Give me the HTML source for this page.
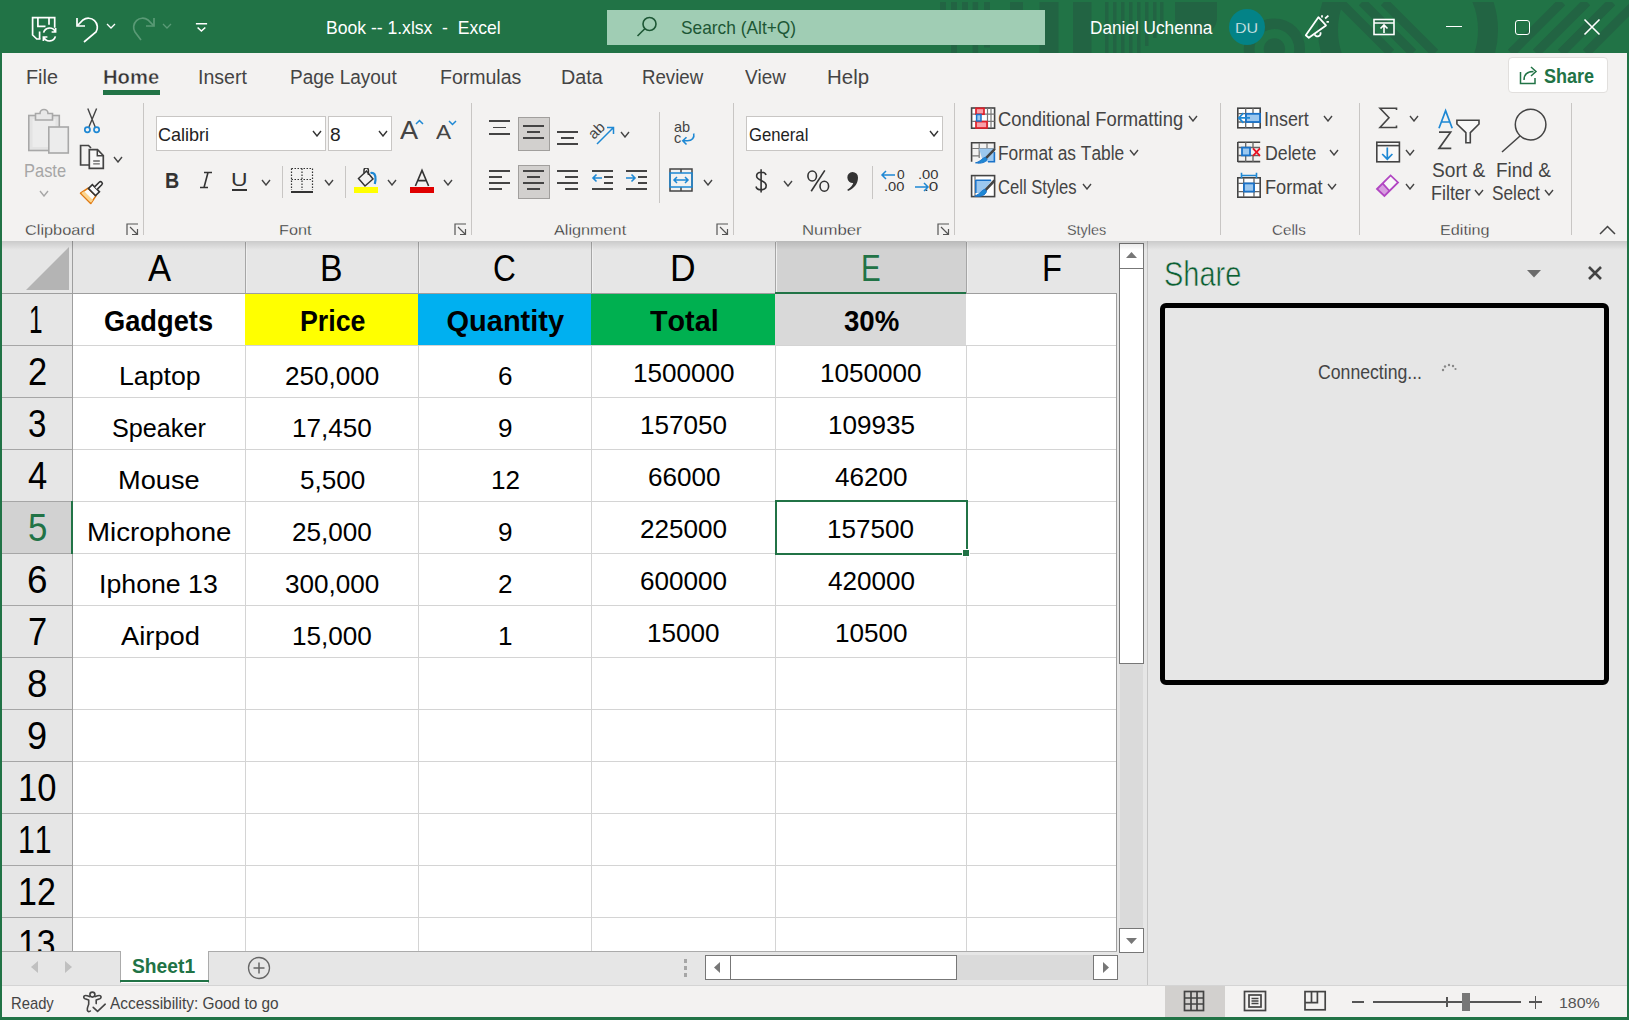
<!DOCTYPE html>
<html><head><meta charset="utf-8"><title>Excel</title><style>*{margin:0;padding:0}
html,body{width:1629px;height:1020px;overflow:hidden;background:#fff;font-family:"Liberation Sans",sans-serif}
.a,.t{position:absolute}
.t{white-space:nowrap;transform-origin:0 0;font-kerning:none}
.box{background:#fff;border:1px solid #c8c6c4;box-sizing:border-box}
.sb{background:#fff;border:1px solid #777;box-sizing:border-box}
</style></head><body>
<div class="a" style="left:0;top:0;width:1629px;height:53px;background:#217346"></div>
<svg class="a" style="left:0;top:0" width="1629" height="53" viewBox="0 0 1629 53">
<defs><clipPath id="tb"><rect x="900" y="2" width="729" height="51"/></clipPath></defs>
<g clip-path="url(#tb)" fill="#226443">
<rect x="940" y="2" width="6" height="43"/><rect x="951" y="2" width="6" height="51"/><rect x="962" y="2" width="6" height="43"/><rect x="972.6" y="2" width="5.5" height="51"/><rect x="984" y="2" width="6" height="45.5"/><rect x="1010" y="2" width="13" height="9"/>
<rect x="1039.5" y="2" width="19" height="51"/><rect x="1073" y="2" width="18.5" height="51"/>
<path d="M1105 2 h3.5 v51 h-3.5z M1113 2 h3.5 v51 h-3.5z M1121 2 h3.5 v51 h-3.5z M1129 2 h3.5 v51 h-3.5z M1137 2 h3.5 v51 h-3.5z M1145 2 h3.5 v44 h-3.5z M1153 2 h3.5 v36 h-3.5z M1160 2 h3.5 v28 h-3.5z"/>
<path d="M1175 2 H1217 V18 a17 17 0 0 1 -17 17 h-8 a17 17 0 0 1 -17 -17 z"/>
<circle cx="1274.4" cy="49" r="10.7"/>
<circle cx="1274.4" cy="49" r="25.25" fill="none" stroke="#226443" stroke-width="10.7"/>
<circle cx="1408" cy="30" r="80" fill="none" stroke="#226443" stroke-width="20"/>
<path d="M1340 2 L1391 53 M1362 2 L1413 53 M1384 2 L1435 53" stroke="#226443" stroke-width="9" fill="none"/>
<path d="M1511 53 L1562 2 M1536 53 L1587 2 M1561 53 L1612 2 M1586 53 L1637 2" stroke="#226443" stroke-width="9" fill="none"/>
</g>
</svg>
<svg class="a" style="left:25px;top:10px" width="40" height="35" viewBox="25 10 40 35" fill="none" stroke="#fff" stroke-width="1.7">
<path d="M40.5 39 H36.8 L32.6 35 V17.7 H54.7 V27.8"/><path d="M37.9 17.7 V26.3 H45.5 M49 17.7 V24.8 M39.6 31.5 V38.8"/>
<path d="M43.6 32.6 A6.2 6.2 0 0 1 55.2 31.6 M55.6 28 V32 H51.6"/><path d="M55.4 36.4 A6.2 6.2 0 0 1 43.8 37.4 M43.4 41 V37 H47.4"/>
</svg>
<svg class="a" style="left:74px;top:15px" width="26" height="28" viewBox="0 0 26 28" fill="none" stroke="#fff" stroke-width="1.7">
<path d="M3 3 V11 H11"/><path d="M3.5 10.5 L9 5 a9 9 0 0 1 13 12 L10 27"/>
</svg>
<svg class="a" style="left:105px;top:22px" width="12" height="8" viewBox="0 0 12 8" fill="none" stroke="#fff" stroke-width="1.3"><path d="M2 2 L6 6 L10 2"/></svg>
<svg class="a" style="left:131px;top:15px" width="26" height="28" viewBox="0 0 26 28" fill="none" stroke="#5a9a76" stroke-width="1.7">
<path d="M23 3 V11 H15"/><path d="M22.5 10.5 L17 5 a9 9 0 0 0 -13 12 L10 25"/>
</svg>
<svg class="a" style="left:161px;top:22px" width="12" height="8" viewBox="0 0 12 8" fill="none" stroke="#5a9a76" stroke-width="1.3"><path d="M2 2 L6 6 L10 2"/></svg>
<svg class="a" style="left:194px;top:20px" width="16" height="14" viewBox="0 0 16 14" fill="none" stroke="#fff" stroke-width="1.6"><path d="M1.9 3.8 H13.1 M3.6 7.5 L7.4 11 L11.3 7.5"/></svg>
<div class="t" style="left:326.16px;top:17.00px;font-size:18.50px;line-height:21px;color:#fff;transform:scaleX(0.9489);white-space:pre;">Book -- 1.xlsx  -  Excel</div>
<div class="a" style="left:607px;top:10px;width:438px;height:35px;background:#a0cdb4"></div>
<svg class="a" style="left:634px;top:14px" width="26" height="26" viewBox="0 0 26 26" fill="none" stroke="#1d5735" stroke-width="1.6"><circle cx="15.5" cy="10" r="6.5"/><path d="M10.8 14.7 L3.5 22"/></svg>
<div class="t" style="left:681.01px;top:17.00px;font-size:18.50px;line-height:21px;color:#1d5735;transform:scaleX(0.9365);">Search (Alt+Q)</div>
<div class="t" style="left:1090.29px;top:17.00px;font-size:18.50px;line-height:21px;color:#fff;transform:scaleX(0.9299);">Daniel Uchenna</div>
<div class="a" style="left:1229px;top:8.9px;width:36px;height:36px;border-radius:50%;background:#038387"></div>
<div class="t" style="left:1235.49px;top:18.80px;font-size:15.50px;line-height:17px;color:#f0fafa;transform:scaleX(1.0341);-webkit-text-stroke:0.35px #038387;">DU</div>
<svg class="a" style="left:1295px;top:8px" width="45" height="37" viewBox="0 0 45 37" fill="none" stroke="#fff" stroke-width="1.8" stroke-linejoin="round">
<path d="M10.8 27.2 L23.4 9.2 L31 17.4 L13.8 29.8 Z"/><path d="M19.6 26.4 A3.1 3.1 0 1 0 25.4 24.2"/>
<path d="M27 7.2 V9.6 M30.1 10.5 L33.4 7.6 M31.5 13.8 H33.9"/></svg>
<svg class="a" style="left:1372px;top:17px" width="24" height="20" viewBox="0 0 24 20" fill="none" stroke="#fff" stroke-width="1.6">
<rect x="2" y="2.5" width="20" height="15"/><path d="M2 6 H22 M12 16 V8.5 M8.5 11.5 L12 8 L15.5 11.5"/></svg>
<div class="a" style="left:1446px;top:25.5px;width:16px;height:1.6px;background:#fff"></div>
<div class="a" style="left:1515px;top:19.5px;width:15px;height:15px;border:1.6px solid #fff;border-radius:3px;box-sizing:border-box"></div>
<svg class="a" style="left:1582px;top:17px" width="20" height="20" viewBox="0 0 20 20" stroke="#fff" stroke-width="1.6"><path d="M2.5 2.5 L17.5 17.5 M17.5 2.5 L2.5 17.5"/></svg>
<div class="a" style="left:2px;top:53px;width:1625px;height:188px;background:#f3f2f1"></div>
<div class="t" style="left:25.98px;top:66.00px;font-size:20.00px;line-height:22px;color:#444;transform:scaleX(0.9900);">File</div>
<div class="t" style="left:198.19px;top:66.00px;font-size:20.00px;line-height:22px;color:#444;transform:scaleX(0.9786);">Insert</div>
<div class="t" style="left:290.44px;top:66.00px;font-size:20.00px;line-height:22px;color:#444;transform:scaleX(0.9500);">Page Layout</div>
<div class="t" style="left:440.00px;top:66.00px;font-size:20.00px;line-height:22px;color:#444;transform:scaleX(0.9755);">Formulas</div>
<div class="t" style="left:560.98px;top:66.00px;font-size:20.00px;line-height:22px;color:#444;transform:scaleX(0.9876);">Data</div>
<div class="t" style="left:641.77px;top:66.00px;font-size:20.00px;line-height:22px;color:#444;transform:scaleX(0.9330);">Review</div>
<div class="t" style="left:745.42px;top:66.00px;font-size:20.00px;line-height:22px;color:#444;transform:scaleX(0.9443);">View</div>
<div class="t" style="left:826.62px;top:66.00px;font-size:20.00px;line-height:22px;color:#444;transform:scaleX(1.0219);">Help</div>
<div class="t" style="left:102.65px;top:66.00px;font-size:20.00px;line-height:22px;color:#333;font-weight:700;transform:scaleX(1.0104);-webkit-text-stroke:0.45px #f3f2f1;">Home</div>
<div class="a" style="left:103px;top:90px;width:57px;height:5px;background:#217346"></div>
<div class="a" style="left:1508px;top:57px;width:100px;height:36px;background:#fff;border:1px solid #e1dfdd;border-radius:4px;box-sizing:border-box"></div>
<svg class="a" style="left:1518px;top:64px" width="22" height="22" viewBox="0 0 22 22" fill="none" stroke="#217346" stroke-width="1.5">
<path d="M2.5 8 V19.5 H17 V14"/><path d="M6 16 C6 10 10 7.5 15.5 7.5 M13 3 L18 7.5 L13 12"/></svg>
<div class="t" style="left:1544.48px;top:65.00px;font-size:19.50px;line-height:22px;color:#217346;font-weight:700;transform:scaleX(0.9251);">Share</div>
<div class="a" style="left:2px;top:241px;width:1146px;height:710px;background:#fff"></div>
<div class="a" style="left:2px;top:241px;width:1115px;height:52px;background:#e6e6e6"></div>
<div class="a" style="left:776px;top:241px;width:190px;height:52px;background:#d2d2d2"></div>
<div class="a" style="left:2px;top:293px;width:70px;height:658px;background:#e6e6e6"></div>
<div class="a" style="left:2px;top:502px;width:70px;height:51px;background:#d2d2d2"></div>
<div class="a" style="left:245px;top:294px;width:173px;height:51px;background:#ffff00"></div>
<div class="a" style="left:418px;top:294px;width:173px;height:51px;background:#00b0f0"></div>
<div class="a" style="left:591px;top:294px;width:184px;height:51px;background:#00b050"></div>
<div class="a" style="left:775px;top:294px;width:191px;height:51px;background:#d9d9d9"></div>
<div class="a" style="left:245px;top:345px;width:1px;height:606px;background:#d4d4d4"></div>
<div class="a" style="left:418px;top:345px;width:1px;height:606px;background:#d4d4d4"></div>
<div class="a" style="left:591px;top:345px;width:1px;height:606px;background:#d4d4d4"></div>
<div class="a" style="left:775px;top:345px;width:1px;height:606px;background:#d4d4d4"></div>
<div class="a" style="left:966px;top:345px;width:1px;height:606px;background:#d4d4d4"></div>
<div class="a" style="left:73px;top:345px;width:1043px;height:1px;background:#d4d4d4"></div>
<div class="a" style="left:73px;top:397px;width:1043px;height:1px;background:#d4d4d4"></div>
<div class="a" style="left:73px;top:449px;width:1043px;height:1px;background:#d4d4d4"></div>
<div class="a" style="left:73px;top:501px;width:1043px;height:1px;background:#d4d4d4"></div>
<div class="a" style="left:73px;top:553px;width:1043px;height:1px;background:#d4d4d4"></div>
<div class="a" style="left:73px;top:605px;width:1043px;height:1px;background:#d4d4d4"></div>
<div class="a" style="left:73px;top:657px;width:1043px;height:1px;background:#d4d4d4"></div>
<div class="a" style="left:73px;top:709px;width:1043px;height:1px;background:#d4d4d4"></div>
<div class="a" style="left:73px;top:761px;width:1043px;height:1px;background:#d4d4d4"></div>
<div class="a" style="left:73px;top:813px;width:1043px;height:1px;background:#d4d4d4"></div>
<div class="a" style="left:73px;top:865px;width:1043px;height:1px;background:#d4d4d4"></div>
<div class="a" style="left:73px;top:917px;width:1043px;height:1px;background:#d4d4d4"></div>
<div class="a" style="left:245px;top:242px;width:1px;height:51px;background:#a6a6a6"></div>
<div class="a" style="left:246px;top:242px;width:1px;height:51px;background:#f0f0f0"></div>
<div class="a" style="left:418px;top:242px;width:1px;height:51px;background:#a6a6a6"></div>
<div class="a" style="left:419px;top:242px;width:1px;height:51px;background:#f0f0f0"></div>
<div class="a" style="left:591px;top:242px;width:1px;height:51px;background:#a6a6a6"></div>
<div class="a" style="left:592px;top:242px;width:1px;height:51px;background:#f0f0f0"></div>
<div class="a" style="left:775px;top:242px;width:1px;height:51px;background:#a6a6a6"></div>
<div class="a" style="left:776px;top:242px;width:1px;height:51px;background:#f0f0f0"></div>
<div class="a" style="left:966px;top:242px;width:1px;height:51px;background:#a6a6a6"></div>
<div class="a" style="left:967px;top:242px;width:1px;height:51px;background:#f0f0f0"></div>
<div class="a" style="left:2px;top:293px;width:1115px;height:1px;background:#9e9e9e"></div>
<div class="a" style="left:775px;top:292px;width:191px;height:2px;background:#217346"></div>
<div class="a" style="left:72px;top:241px;width:1px;height:710px;background:#9e9e9e"></div>
<div class="a" style="left:2px;top:345px;width:70px;height:1px;background:#a6a6a6"></div>
<div class="a" style="left:2px;top:397px;width:70px;height:1px;background:#a6a6a6"></div>
<div class="a" style="left:2px;top:449px;width:70px;height:1px;background:#a6a6a6"></div>
<div class="a" style="left:2px;top:501px;width:70px;height:1px;background:#a6a6a6"></div>
<div class="a" style="left:2px;top:553px;width:70px;height:1px;background:#a6a6a6"></div>
<div class="a" style="left:2px;top:605px;width:70px;height:1px;background:#a6a6a6"></div>
<div class="a" style="left:2px;top:657px;width:70px;height:1px;background:#a6a6a6"></div>
<div class="a" style="left:2px;top:709px;width:70px;height:1px;background:#a6a6a6"></div>
<div class="a" style="left:2px;top:761px;width:70px;height:1px;background:#a6a6a6"></div>
<div class="a" style="left:2px;top:813px;width:70px;height:1px;background:#a6a6a6"></div>
<div class="a" style="left:2px;top:865px;width:70px;height:1px;background:#a6a6a6"></div>
<div class="a" style="left:2px;top:917px;width:70px;height:1px;background:#a6a6a6"></div>
<div class="a" style="left:71px;top:501px;width:2px;height:53px;background:#217346"></div>
<div class="a" style="left:1116px;top:293px;width:1px;height:658px;background:#9e9e9e"></div>
<svg class="a" style="left:25px;top:246px" width="45" height="45" viewBox="0 0 45 45"><path d="M44 1 V44 H1 Z" fill="#b4b4b4"/></svg>
<div class="t" style="left:147.93px;top:247.00px;font-size:37.50px;line-height:42px;color:#000;transform:scaleX(0.9250);">A</div>
<div class="t" style="left:320.23px;top:247.00px;font-size:37.50px;line-height:42px;color:#000;transform:scaleX(0.9019);">B</div>
<div class="t" style="left:493.40px;top:247.00px;font-size:37.50px;line-height:42px;color:#000;transform:scaleX(0.8421);">C</div>
<div class="t" style="left:670.09px;top:247.00px;font-size:37.50px;line-height:42px;color:#000;transform:scaleX(0.9455);">D</div>
<div class="t" style="left:860.58px;top:247.00px;font-size:37.50px;line-height:42px;color:#217346;transform:scaleX(0.7872);">E</div>
<div class="t" style="left:1042.31px;top:247.00px;font-size:37.50px;line-height:42px;color:#000;transform:scaleX(0.8729);">F</div>
<div class="t" style="left:29.14px;top:299.30px;font-size:38.00px;line-height:42px;color:#000;transform:scaleX(0.6409);">1</div>
<div class="t" style="left:27.87px;top:351.30px;font-size:38.00px;line-height:42px;color:#000;transform:scaleX(0.9069);">2</div>
<div class="t" style="left:28.34px;top:403.30px;font-size:38.00px;line-height:42px;color:#000;transform:scaleX(0.8714);">3</div>
<div class="t" style="left:28.01px;top:455.30px;font-size:38.00px;line-height:42px;color:#000;transform:scaleX(0.9087);">4</div>
<div class="t" style="left:27.91px;top:507.30px;font-size:38.00px;line-height:42px;color:#217346;transform:scaleX(0.9158);">5</div>
<div class="t" style="left:27.13px;top:559.30px;font-size:38.00px;line-height:42px;color:#000;transform:scaleX(0.9695);">6</div>
<div class="t" style="left:27.83px;top:611.30px;font-size:38.00px;line-height:42px;color:#000;transform:scaleX(0.9089);">7</div>
<div class="t" style="left:27.31px;top:663.30px;font-size:38.00px;line-height:42px;color:#000;transform:scaleX(0.9646);">8</div>
<div class="t" style="left:27.21px;top:715.30px;font-size:38.00px;line-height:42px;color:#000;transform:scaleX(0.9514);">9</div>
<div class="t" style="left:18.16px;top:767.30px;font-size:38.00px;line-height:42px;color:#000;transform:scaleX(0.9106);">10</div>
<div class="t" style="left:18.49px;top:819.30px;font-size:38.00px;line-height:42px;color:#000;transform:scaleX(0.7970);">11</div>
<div class="t" style="left:18.21px;top:871.30px;font-size:38.00px;line-height:42px;color:#000;transform:scaleX(0.8942);">12</div>
<div class="t" style="left:18.23px;top:923.30px;font-size:38.00px;line-height:42px;color:#000;transform:scaleX(0.8885);">13</div>
<div class="t" style="left:104.48px;top:305.00px;font-size:29.00px;line-height:32px;color:#000;font-weight:700;transform:scaleX(0.9397);">Gadgets</div>
<div class="t" style="left:299.61px;top:305.00px;font-size:29.00px;line-height:32px;color:#000;font-weight:700;transform:scaleX(0.9234);">Price</div>
<div class="t" style="left:446.51px;top:305.00px;font-size:29.00px;line-height:32px;color:#000;font-weight:700;">Quantity</div>
<div class="t" style="left:650.08px;top:305.00px;font-size:29.00px;line-height:32px;color:#000;font-weight:700;transform:scaleX(0.9911);">Total</div>
<div class="t" style="left:844.27px;top:305.00px;font-size:29.00px;line-height:32px;color:#000;font-weight:700;transform:scaleX(0.9521);">30%</div>
<div class="t" style="left:118.51px;top:360.60px;font-size:26.50px;line-height:30px;color:#000;transform:scaleX(1.0069);">Laptop</div>
<div class="t" style="left:285.18px;top:360.50px;font-size:26.50px;line-height:30px;color:#000;transform:scaleX(0.9850);">250,000</div>
<div class="t" style="left:498.15px;top:360.50px;font-size:26.50px;line-height:30px;color:#000;transform:scaleX(0.9850);">6</div>
<div class="t" style="left:632.71px;top:357.60px;font-size:26.50px;line-height:30px;color:#000;transform:scaleX(0.9850);">1500000</div>
<div class="t" style="left:820.21px;top:357.60px;font-size:26.50px;line-height:30px;color:#000;transform:scaleX(0.9850);">1050000</div>
<div class="t" style="left:112.06px;top:412.60px;font-size:26.50px;line-height:30px;color:#000;transform:scaleX(0.9510);">Speaker</div>
<div class="t" style="left:292.10px;top:412.50px;font-size:26.50px;line-height:30px;color:#000;transform:scaleX(0.9850);">17,450</div>
<div class="t" style="left:498.25px;top:412.50px;font-size:26.50px;line-height:30px;color:#000;transform:scaleX(0.9850);">9</div>
<div class="t" style="left:639.96px;top:409.60px;font-size:26.50px;line-height:30px;color:#000;transform:scaleX(0.9850);">157050</div>
<div class="t" style="left:827.50px;top:409.60px;font-size:26.50px;line-height:30px;color:#000;transform:scaleX(0.9850);">109935</div>
<div class="t" style="left:118.17px;top:464.60px;font-size:26.50px;line-height:30px;color:#000;transform:scaleX(1.0264);">Mouse</div>
<div class="t" style="left:299.83px;top:464.50px;font-size:26.50px;line-height:30px;color:#000;transform:scaleX(0.9850);">5,500</div>
<div class="t" style="left:490.65px;top:464.50px;font-size:26.50px;line-height:30px;color:#000;transform:scaleX(0.9850);">12</div>
<div class="t" style="left:647.55px;top:461.60px;font-size:26.50px;line-height:30px;color:#000;transform:scaleX(0.9850);">66000</div>
<div class="t" style="left:835.42px;top:461.60px;font-size:26.50px;line-height:30px;color:#000;transform:scaleX(0.9850);">46200</div>
<div class="t" style="left:87.23px;top:516.60px;font-size:26.50px;line-height:30px;color:#000;transform:scaleX(1.0436);">Microphone</div>
<div class="t" style="left:292.43px;top:516.50px;font-size:26.50px;line-height:30px;color:#000;transform:scaleX(0.9850);">25,000</div>
<div class="t" style="left:498.25px;top:516.50px;font-size:26.50px;line-height:30px;color:#000;transform:scaleX(0.9850);">9</div>
<div class="t" style="left:640.30px;top:513.60px;font-size:26.50px;line-height:30px;color:#000;transform:scaleX(0.9850);">225000</div>
<div class="t" style="left:827.46px;top:513.60px;font-size:26.50px;line-height:30px;color:#000;transform:scaleX(0.9850);">157500</div>
<div class="t" style="left:98.73px;top:568.60px;font-size:26.50px;line-height:30px;color:#000;transform:scaleX(1.0080);">Iphone 13</div>
<div class="t" style="left:285.34px;top:568.50px;font-size:26.50px;line-height:30px;color:#000;transform:scaleX(0.9850);">300,000</div>
<div class="t" style="left:498.24px;top:568.50px;font-size:26.50px;line-height:30px;color:#000;transform:scaleX(0.9850);">2</div>
<div class="t" style="left:640.30px;top:565.60px;font-size:26.50px;line-height:30px;color:#000;transform:scaleX(0.9850);">600000</div>
<div class="t" style="left:828.16px;top:565.60px;font-size:26.50px;line-height:30px;color:#000;transform:scaleX(0.9850);">420000</div>
<div class="t" style="left:120.85px;top:620.60px;font-size:26.50px;line-height:30px;color:#000;transform:scaleX(1.0315);">Airpod</div>
<div class="t" style="left:292.10px;top:620.50px;font-size:26.50px;line-height:30px;color:#000;transform:scaleX(0.9850);">15,000</div>
<div class="t" style="left:497.88px;top:620.50px;font-size:26.50px;line-height:30px;color:#000;transform:scaleX(0.9850);">1</div>
<div class="t" style="left:647.22px;top:617.60px;font-size:26.50px;line-height:30px;color:#000;transform:scaleX(0.9850);">15000</div>
<div class="t" style="left:834.72px;top:617.60px;font-size:26.50px;line-height:30px;color:#000;transform:scaleX(0.9850);">10500</div>
<div class="a" style="left:775px;top:500px;width:193px;height:55px;border:2px solid #217346;box-sizing:border-box"></div>
<div class="a" style="left:962px;top:549px;width:8px;height:8px;background:#fff"></div>
<div class="a" style="left:963px;top:550px;width:6px;height:6px;background:#217346"></div>
<div class="a" style="left:1117px;top:241px;width:31px;height:744px;background:#e6e6e6"></div>
<div class="a" style="left:1120px;top:664px;width:23px;height:264px;background:#dadada"></div>
<div class="a sb" style="left:1119px;top:243px;width:25px;height:26px"></div>
<div class="a sb" style="left:1119px;top:268px;width:25px;height:396px"></div>
<div class="a sb" style="left:1119px;top:928px;width:25px;height:25px"></div>
<svg class="a" style="left:1125px;top:251px" width="13" height="8" viewBox="0 0 13 8"><path d="M1 7 L6.5 1 L12 7Z" fill="#777"/></svg>
<svg class="a" style="left:1125px;top:937px" width="13" height="8" viewBox="0 0 13 8"><path d="M1 1 L6.5 7 L12 1Z" fill="#777"/></svg>
<div class="a" style="left:1147px;top:241px;width:1px;height:744px;background:#c6c6c6"></div>
<div class="a" style="left:2px;top:951px;width:1115px;height:1px;background:#ababab"></div>
<div class="a" style="left:2px;top:952px;width:1115px;height:33px;background:#e6e6e6"></div>
<svg class="a" style="left:28px;top:960px" width="12" height="14" viewBox="0 0 12 14"><path d="M10 1 L3 7 L10 13Z" fill="#c0c0c0"/></svg>
<svg class="a" style="left:63px;top:960px" width="12" height="14" viewBox="0 0 12 14"><path d="M2 1 L9 7 L2 13Z" fill="#c0c0c0"/></svg>
<div class="a" style="left:120px;top:951px;width:89px;height:32px;background:#fff;border-left:1px solid #ababab;border-right:1px solid #ababab;box-sizing:border-box"></div>
<div class="a" style="left:120px;top:979.5px;width:89px;height:2.5px;background:#217346"></div>
<div class="t" style="left:131.95px;top:955.00px;font-size:19.50px;line-height:22px;color:#217346;font-weight:700;transform:scaleX(0.9866);">Sheet1</div>
<svg class="a" style="left:247px;top:956px" width="24" height="24" viewBox="0 0 24 24" fill="none" stroke="#666" stroke-width="1.3"><circle cx="12" cy="12" r="10.5"/><path d="M12 6.5 V17.5 M6.5 12 H17.5" stroke-width="1.5"/></svg>
<div class="a" style="left:684px;top:959px;width:3px;height:4px;background:#a6a6a6"></div>
<div class="a" style="left:684px;top:966px;width:3px;height:4px;background:#a6a6a6"></div>
<div class="a" style="left:684px;top:973px;width:3px;height:4px;background:#a6a6a6"></div>
<div class="a" style="left:730px;top:955px;width:363px;height:25px;background:#dadada"></div>
<div class="a sb" style="left:705px;top:955px;width:26px;height:25px"></div>
<div class="a sb" style="left:730px;top:955px;width:227px;height:25px"></div>
<div class="a sb" style="left:1093px;top:955px;width:25px;height:25px"></div>
<svg class="a" style="left:713px;top:961px" width="8" height="13" viewBox="0 0 8 13"><path d="M7 1 L1 6.5 L7 12Z" fill="#777"/></svg>
<svg class="a" style="left:1102px;top:961px" width="8" height="13" viewBox="0 0 8 13"><path d="M1 1 L7 6.5 L1 12Z" fill="#777"/></svg>
<div class="a" style="left:1148px;top:241px;width:1479px;height:744px;background:#e6e6e6"></div>
<div class="t" style="left:1164.18px;top:255.00px;font-size:34.50px;line-height:38px;color:#0c5f32;transform:scaleX(0.8408);-webkit-text-stroke:0.6px #e6e6e6;">Share</div>
<svg class="a" style="left:1526px;top:269px" width="16" height="10" viewBox="0 0 16 10"><path d="M1 1 H15 L8 8.5Z" fill="#6b6b6b"/></svg>
<svg class="a" style="left:1586px;top:264px" width="18" height="18" viewBox="0 0 18 18" stroke="#444" stroke-width="2.6"><path d="M3 3 L15 15 M15 3 L3 15"/></svg>
<div class="a" style="left:1160px;top:303px;width:449px;height:382px;border:5px solid #000;border-radius:6px;box-sizing:border-box"></div>
<div class="t" style="left:1318.30px;top:360.70px;font-size:20.00px;line-height:22px;color:#444;transform:scaleX(0.8825);">Connecting...</div>
<svg class="a" style="left:1440px;top:362px" width="18" height="10" viewBox="0 0 18 10" fill="#888"><circle cx="3" cy="8" r="1.2"/><circle cx="5" cy="4.5" r="1.2"/><circle cx="9" cy="3" r="1.2"/><circle cx="13" cy="4" r="1.2"/><circle cx="15.5" cy="7" r="1.1"/></svg>
<div class="a" style="left:2px;top:985px;width:1625px;height:32px;background:#f3f2f1"></div>
<div class="a" style="left:2px;top:985px;width:1625px;height:1px;background:#d4d4d4"></div>
<div class="t" style="left:11.29px;top:994.00px;font-size:17.00px;line-height:19px;color:#444;transform:scaleX(0.8698);">Ready</div>
<svg class="a" style="left:78px;top:986px" width="32" height="30" viewBox="78 986 32 30" fill="none" stroke="#444" stroke-width="1.6" stroke-linecap="round" stroke-linejoin="round">
<circle cx="92.4" cy="994.6" r="2.5"/>
<path d="M89.5 996.6 C87.5 995.8 85.5 995 84.3 995.9 C83.2 996.9 83.8 998.2 85 998.7 L88.7 1000 V1004.2 C88 1006 86.8 1008.5 87.3 1010.3 C87.8 1012 89.5 1011.8 90.4 1011"/>
<path d="M95.3 996.6 C97.3 995.8 99.3 995 100.5 995.9 C101.6 996.9 101 998.2 99.8 998.7 L96.2 1000 V1003.6"/>
<path d="M93.2 1007.3 L97.6 1011.4 L105.2 1004.2"/>
</svg>
<div class="t" style="left:109.97px;top:994.00px;font-size:17.00px;line-height:19px;color:#444;transform:scaleX(0.9062);">Accessibility: Good to go</div>
<div class="a" style="left:1165px;top:986px;width:60px;height:31px;background:#d2d0ce"></div>
<svg class="a" style="left:1183px;top:990px" width="22" height="22" viewBox="0 0 22 22" fill="none" stroke="#444" stroke-width="1.7"><rect x="1.5" y="1.5" width="19" height="19"/><path d="M8 1.5 V20.5 M14 1.5 V20.5 M1.5 8 H20.5 M1.5 14 H20.5"/></svg>
<svg class="a" style="left:1243px;top:990px" width="24" height="22" viewBox="0 0 24 22" fill="none" stroke="#444" stroke-width="1.7"><rect x="1.5" y="1.5" width="21" height="19"/><rect x="6" y="5" width="12" height="12"/><path d="M8.5 8.5 H15.5 M8.5 11 H15.5 M8.5 13.5 H15.5"/></svg>
<svg class="a" style="left:1300px;top:986px" width="30" height="30" viewBox="1300 986 30 30" fill="none" stroke="#444" stroke-width="1.7"><rect x="1305" y="991.6" width="20.2" height="18.2"/><path d="M1305 1002.6 H1317.4 V991.6 M1311.5 991.6 V1002.6"/></svg>
<div class="a" style="left:1352px;top:1001px;width:12px;height:1.5px;background:#555"></div>
<div class="a" style="left:1373px;top:1001px;width:148px;height:2px;background:#555"></div>
<div class="a" style="left:1446px;top:997px;width:2px;height:10px;background:#555"></div>
<div class="a" style="left:1462px;top:993px;width:8px;height:18px;background:#777"></div>
<div class="a" style="left:1529px;top:1001px;width:13px;height:1.5px;background:#555"></div>
<div class="a" style="left:1534.75px;top:995.5px;width:1.5px;height:13px;background:#555"></div>
<div class="t" style="left:1558.79px;top:994.00px;font-size:15.00px;line-height:17px;color:#555;transform:scaleX(1.0630);">180%</div>
<div class="a" style="left:2px;top:241px;width:1625px;height:9px;background:linear-gradient(rgba(0,0,0,0.12),rgba(0,0,0,0))"></div>
<div class="a" style="left:0;top:53px;width:2px;height:967px;background:#217346"></div>
<div class="a" style="left:1627px;top:53px;width:2px;height:967px;background:#217346"></div>
<div class="a" style="left:0;top:1017px;width:1629px;height:3px;background:#217346"></div>
<div class="t" style="left:25.17px;top:220.60px;font-size:15.50px;line-height:17px;color:#2a2a2a;transform:scaleX(1.0533);-webkit-text-stroke:0.3px #f3f2f1;">Clipboard</div>
<div class="t" style="left:278.67px;top:220.60px;font-size:15.50px;line-height:17px;color:#2a2a2a;transform:scaleX(1.0462);-webkit-text-stroke:0.3px #f3f2f1;">Font</div>
<div class="t" style="left:553.97px;top:220.60px;font-size:15.50px;line-height:17px;color:#2a2a2a;transform:scaleX(1.0468);-webkit-text-stroke:0.3px #f3f2f1;">Alignment</div>
<div class="t" style="left:801.62px;top:220.60px;font-size:15.50px;line-height:17px;color:#2a2a2a;transform:scaleX(1.0821);-webkit-text-stroke:0.3px #f3f2f1;">Number</div>
<div class="t" style="left:1067.35px;top:220.60px;font-size:15.50px;line-height:17px;color:#2a2a2a;transform:scaleX(0.9281);-webkit-text-stroke:0.3px #f3f2f1;">Styles</div>
<div class="t" style="left:1272.23px;top:220.60px;font-size:15.50px;line-height:17px;color:#2a2a2a;transform:scaleX(0.9787);-webkit-text-stroke:0.3px #f3f2f1;">Cells</div>
<div class="t" style="left:1440.27px;top:220.60px;font-size:15.50px;line-height:17px;color:#2a2a2a;transform:scaleX(1.0460);-webkit-text-stroke:0.3px #f3f2f1;">Editing</div>
<div class="a" style="left:143px;top:103px;width:1px;height:132px;background:#c8c6c4"></div>
<div class="a" style="left:471px;top:103px;width:1px;height:132px;background:#c8c6c4"></div>
<div class="a" style="left:733px;top:103px;width:1px;height:132px;background:#c8c6c4"></div>
<div class="a" style="left:954px;top:103px;width:1px;height:132px;background:#c8c6c4"></div>
<div class="a" style="left:1220px;top:103px;width:1px;height:132px;background:#c8c6c4"></div>
<div class="a" style="left:1359px;top:103px;width:1px;height:132px;background:#c8c6c4"></div>
<div class="a" style="left:1571px;top:103px;width:1px;height:132px;background:#c8c6c4"></div>
<svg class="a" style="left:126px;top:223px" width="13" height="13" viewBox="0 0 13 13" fill="none" stroke="#555" stroke-width="1.2"><path d="M1 12 V1 H12 M4 4 L11.5 11.5 M11.5 6 V11.5 H6"/></svg>
<svg class="a" style="left:454px;top:223px" width="13" height="13" viewBox="0 0 13 13" fill="none" stroke="#555" stroke-width="1.2"><path d="M1 12 V1 H12 M4 4 L11.5 11.5 M11.5 6 V11.5 H6"/></svg>
<svg class="a" style="left:716px;top:223px" width="13" height="13" viewBox="0 0 13 13" fill="none" stroke="#555" stroke-width="1.2"><path d="M1 12 V1 H12 M4 4 L11.5 11.5 M11.5 6 V11.5 H6"/></svg>
<svg class="a" style="left:937px;top:223px" width="13" height="13" viewBox="0 0 13 13" fill="none" stroke="#555" stroke-width="1.2"><path d="M1 12 V1 H12 M4 4 L11.5 11.5 M11.5 6 V11.5 H6"/></svg>
<svg class="a" style="left:1598px;top:224px" width="19" height="12" viewBox="0 0 19 12" fill="none" stroke="#444" stroke-width="1.5"><path d="M2 10 L9.5 2.5 L17 10"/></svg>
<svg class="a" style="left:26px;top:106px" width="46" height="50" viewBox="0 0 46 50" stroke="#a8a8a8" stroke-width="1.6">
<rect x="2.8" y="9.5" width="30.5" height="35" fill="#e3e3e3"/>
<rect x="6.5" y="13" width="23" height="28" fill="#ececec" stroke="none"/>
<path d="M9.5 14 V7.5 H14 a4 4 0 0 1 8 0 H26.5 V14 Z" fill="#e8e8e8"/>
<rect x="22.8" y="21" width="19.5" height="26" fill="#ececec"/>
</svg>
<div class="t" style="left:23.65px;top:159.70px;font-size:18.50px;line-height:21px;color:#a6a6a6;transform:scaleX(0.8895);">Paste</div>
<svg class="a" style="left:39px;top:190px" width="10" height="7" viewBox="0 0 10 7" fill="none" stroke="#a6a6a6" stroke-width="1.4"><path d="M1 1 L5.0 6 L9 1"/></svg>
<svg class="a" style="left:75px;top:100px" width="55" height="110" viewBox="75 100 55 110" fill="none" stroke-width="1.4">
<path d="M87.8 108.5 L95.2 127 M96.6 108.5 L88.9 127" stroke="#444"/>
<circle cx="87.4" cy="129.8" r="2.6" stroke="#1e88d4" stroke-width="1.7"/><circle cx="96.6" cy="129.8" r="2.6" stroke="#1e88d4" stroke-width="1.7"/>
<path d="M89 165 H80.6 V145.5 H88.5 L91 148" stroke="#444" stroke-width="1.7"/>
<path d="M89.3 149.7 H97.5 L103.3 155.5 V168.4 H89.3 Z" fill="#f8f8f8" stroke="#444" stroke-width="1.7"/><path d="M97.3 150 V155.8 H103" stroke="#444" stroke-width="1.5"/>
<path d="M93.2 161 H99.8 M93.2 163.8 H99.8" stroke="#666" stroke-width="1.3"/>
<g transform="translate(92 192) rotate(45)">
<path d="M-5.5 0 L5.5 0 L7.2 9 L-7.2 9 Z" fill="#fbfbfb" stroke="#e07a10" stroke-width="1.6" stroke-linejoin="round"/>
<path d="M-6.2 5 L6.4 5 L7 8.3 L-7 8.3 Z" fill="#fcd58e"/>
<rect x="-5" y="-5.5" width="10" height="5.5" fill="#fbfbfb" stroke="#333" stroke-width="1.6"/>
<path d="M-1.8 -5.5 V-12 a1.8 1.8 0 0 1 3.6 0 V-5.5" fill="#fbfbfb" stroke="#333" stroke-width="1.6"/>
</g>
</svg>
<svg class="a" style="left:113px;top:156px" width="10" height="7" viewBox="0 0 10 7" fill="none" stroke="#444" stroke-width="1.4"><path d="M1 1 L5.0 6 L9 1"/></svg>
<div class="a box" style="left:156px;top:116px;width:170px;height:35px"></div>
<div class="t" style="left:158.08px;top:124.00px;font-size:19.00px;line-height:21px;color:#222;transform:scaleX(0.9496);">Calibri</div>
<svg class="a" style="left:312px;top:130px" width="10" height="7" viewBox="0 0 10 7" fill="none" stroke="#333" stroke-width="1.4"><path d="M1 1 L5.0 6 L9 1"/></svg>
<div class="a box" style="left:328px;top:116px;width:64px;height:35px"></div>
<div class="t" style="left:330.17px;top:124.00px;font-size:19.00px;line-height:21px;color:#222;transform:scaleX(1.0095);">8</div>
<svg class="a" style="left:378px;top:130px" width="10" height="7" viewBox="0 0 10 7" fill="none" stroke="#333" stroke-width="1.4"><path d="M1 1 L5.0 6 L9 1"/></svg>
<div class="t" style="left:399.95px;top:115.00px;font-size:26.00px;line-height:30px;color:#444;transform:scaleX(1.0441);">A</div>
<svg class="a" style="left:415px;top:119px" width="9" height="6" viewBox="0 0 9 6" fill="none" stroke="#1e88d4" stroke-width="1.5"><path d="M1 5 L4.5 1.5 L8 5"/></svg>
<div class="t" style="left:435.96px;top:120.00px;font-size:21.00px;line-height:23px;color:#444;transform:scaleX(1.0772);">A</div>
<svg class="a" style="left:448px;top:120px" width="9" height="6" viewBox="0 0 9 6" fill="none" stroke="#1e88d4" stroke-width="1.5"><path d="M1 1 L4.5 4.5 L8 1"/></svg>
<div class="t" style="left:164.68px;top:167.50px;font-size:22.00px;line-height:25px;color:#333;font-weight:700;transform:scaleX(0.8944);">B</div>
<svg class="a" style="left:198px;top:171px" width="16" height="18" viewBox="0 0 16 18" fill="none" stroke="#333" stroke-width="1.6"><path d="M6 1.5 H14 M2 16.5 H10 M10 1.5 L6 16.5"/></svg>
<div class="t" style="left:230.73px;top:169.00px;font-size:19.00px;line-height:21px;color:#333;transform:scaleX(1.2049);">U</div>
<div class="a" style="left:232px;top:189px;width:15px;height:1.5px;background:#333"></div>
<svg class="a" style="left:261px;top:179px" width="10" height="7" viewBox="0 0 10 7" fill="none" stroke="#444" stroke-width="1.4"><path d="M1 1 L5.0 6 L9 1"/></svg>
<div class="a" style="left:282px;top:166px;width:1px;height:32px;background:#c8c6c4"></div>
<svg class="a" style="left:290px;top:167px" width="24" height="26" viewBox="0 0 24 26" fill="none" stroke="#333" stroke-width="1.2" stroke-dasharray="1.5 1.5">
<path d="M1.5 1.5 H22.5 V23 M1.5 1.5 V23 M12 1.5 V23 M1.5 12.5 H22.5"/></svg>
<div class="a" style="left:291px;top:191px;width:22px;height:2px;background:#333"></div>
<svg class="a" style="left:324px;top:179px" width="10" height="7" viewBox="0 0 10 7" fill="none" stroke="#444" stroke-width="1.4"><path d="M1 1 L5.0 6 L9 1"/></svg>
<div class="a" style="left:345px;top:166px;width:1px;height:32px;background:#c8c6c4"></div>
<svg class="a" style="left:355px;top:168px" width="26" height="22" viewBox="0 0 26 22" fill="none" stroke-width="1.5">
<path d="M3.5 10.5 L11.5 3 L18 11 L10 18 Z" stroke="#333"/><path d="M9 5.5 V2.2 a2.2 2.2 0 0 1 4.4 0 V7" stroke="#333"/><path d="M15.5 5 C19 4 21 7 20.5 12 L19.8 16" stroke="#1e88d4" stroke-width="2.2"/></svg>
<div class="a" style="left:354px;top:187px;width:24px;height:6px;background:#ffff00"></div>
<svg class="a" style="left:387px;top:179px" width="10" height="7" viewBox="0 0 10 7" fill="none" stroke="#444" stroke-width="1.4"><path d="M1 1 L5.0 6 L9 1"/></svg>
<svg class="a" style="left:410px;top:166px" width="24" height="22" viewBox="410 166 24 22" fill="none" stroke="#333" stroke-width="1.6"><path d="M415.4 186 L422 170.4 L428.6 186 M417.6 180.6 H426.4"/></svg>
<div class="a" style="left:410px;top:187px;width:24px;height:6px;background:#e00000"></div>
<svg class="a" style="left:443px;top:179px" width="10" height="7" viewBox="0 0 10 7" fill="none" stroke="#444" stroke-width="1.4"><path d="M1 1 L5.0 6 L9 1"/></svg>
<div class="a" style="left:489px;top:120.2px;width:21px;height:1.6px;background:#444"></div><div class="a" style="left:493px;top:126.7px;width:13px;height:1.6px;background:#444"></div><div class="a" style="left:489px;top:133.2px;width:21px;height:1.6px;background:#444"></div>
<div class="a" style="left:518px;top:117px;width:32px;height:34px;background:#d2d0ce;border:1px solid #a19f9d;box-sizing:border-box"></div>
<div class="a" style="left:523px;top:125.2px;width:21px;height:1.6px;background:#444"></div><div class="a" style="left:527px;top:131.2px;width:13px;height:1.6px;background:#444"></div><div class="a" style="left:523px;top:137.2px;width:21px;height:1.6px;background:#444"></div>
<div class="a" style="left:557px;top:131.2px;width:21px;height:1.6px;background:#444"></div><div class="a" style="left:561px;top:137.2px;width:13px;height:1.6px;background:#444"></div><div class="a" style="left:557px;top:143.2px;width:21px;height:1.6px;background:#444"></div>
<svg class="a" style="left:589px;top:118px" width="28" height="28" viewBox="0 0 28 28" fill="none">
<text x="0" y="0" transform="translate(5 22) rotate(-45)" font-family="Liberation Sans" font-size="15" fill="#444">ab</text>
<path d="M8 26 L24 10 M18 9.5 H24.5 V16" stroke="#1e88d4" stroke-width="1.5"/></svg>
<svg class="a" style="left:620px;top:131px" width="10" height="7" viewBox="0 0 10 7" fill="none" stroke="#444" stroke-width="1.4"><path d="M1 1 L5.0 6 L9 1"/></svg>
<div class="a" style="left:659px;top:112px;width:1px;height:91px;background:#c8c6c4"></div>
<svg class="a" style="left:672px;top:120px" width="26" height="28" viewBox="0 0 26 28" fill="none">
<text x="2" y="11.6" font-family="Liberation Sans" font-size="14.5" fill="#444">ab</text><text x="2" y="23.4" font-family="Liberation Sans" font-size="14.5" fill="#444">c</text>
<path d="M21.7 13.5 C22.7 18 20 20.8 15.5 20.8 H11.5 M14.5 17.2 L10.8 20.8 L14.5 24.5" stroke="#1e88d4" stroke-width="1.6"/></svg>
<div class="a" style="left:489px;top:170.2px;width:21px;height:1.6px;background:#444"></div><div class="a" style="left:489px;top:176.2px;width:13px;height:1.6px;background:#444"></div><div class="a" style="left:489px;top:182.2px;width:21px;height:1.6px;background:#444"></div><div class="a" style="left:489px;top:188.2px;width:13px;height:1.6px;background:#444"></div>
<div class="a" style="left:518px;top:165px;width:32px;height:34px;background:#d2d0ce;border:1px solid #a19f9d;box-sizing:border-box"></div>
<div class="a" style="left:523px;top:170.2px;width:21px;height:1.6px;background:#444"></div><div class="a" style="left:527px;top:176.2px;width:13px;height:1.6px;background:#444"></div><div class="a" style="left:523px;top:182.2px;width:21px;height:1.6px;background:#444"></div><div class="a" style="left:527px;top:188.2px;width:13px;height:1.6px;background:#444"></div>
<div class="a" style="left:557px;top:170.2px;width:21px;height:1.6px;background:#444"></div><div class="a" style="left:565px;top:176.2px;width:13px;height:1.6px;background:#444"></div><div class="a" style="left:557px;top:182.2px;width:21px;height:1.6px;background:#444"></div><div class="a" style="left:565px;top:188.2px;width:13px;height:1.6px;background:#444"></div>
<div class="a" style="left:592px;top:170.2px;width:21px;height:1.6px;background:#444"></div><div class="a" style="left:604px;top:176.2px;width:9px;height:1.6px;background:#444"></div><div class="a" style="left:604px;top:182.2px;width:9px;height:1.6px;background:#444"></div><div class="a" style="left:592px;top:188.2px;width:21px;height:1.6px;background:#444"></div>
<div class="a" style="left:626px;top:170.2px;width:21px;height:1.6px;background:#444"></div><div class="a" style="left:638px;top:176.2px;width:9px;height:1.6px;background:#444"></div><div class="a" style="left:638px;top:182.2px;width:9px;height:1.6px;background:#444"></div><div class="a" style="left:626px;top:188.2px;width:21px;height:1.6px;background:#444"></div>
<svg class="a" style="left:591px;top:173px" width="12" height="10" viewBox="0 0 12 10" fill="none" stroke="#1e88d4" stroke-width="1.6"><path d="M11 5 H2 M5.5 1.5 L2 5 L5.5 8.5"/></svg>
<svg class="a" style="left:625px;top:173px" width="12" height="10" viewBox="0 0 12 10" fill="none" stroke="#1e88d4" stroke-width="1.6"><path d="M1 5 H10 M6.5 1.5 L10 5 L6.5 8.5"/></svg>
<svg class="a" style="left:669px;top:168px" width="25" height="25" viewBox="0 0 25 25" fill="none" stroke-width="1.5">
<rect x="1" y="1" width="22" height="22" stroke="#444"/><path d="M12 1 V5 M12 19 V23" stroke="#444"/><rect x="1" y="5" width="22" height="14" stroke="#1e88d4"/><path d="M5 12 H19 M8 9 L5 12 L8 15 M16 9 L19 12 L16 15" stroke="#1e88d4"/></svg>
<svg class="a" style="left:703px;top:179px" width="10" height="7" viewBox="0 0 10 7" fill="none" stroke="#444" stroke-width="1.4"><path d="M1 1 L5.0 6 L9 1"/></svg>
<div class="a box" style="left:746px;top:116px;width:197px;height:35px"></div>
<div class="t" style="left:748.76px;top:124.00px;font-size:19.00px;line-height:21px;color:#222;transform:scaleX(0.8781);">General</div>
<svg class="a" style="left:929px;top:130px" width="10" height="7" viewBox="0 0 10 7" fill="none" stroke="#333" stroke-width="1.4"><path d="M1 1 L5.0 6 L9 1"/></svg>
<svg class="a" style="left:750px;top:162px" width="195" height="38" viewBox="750 162 195 38" fill="none" stroke="#333" stroke-width="1.6">
<path d="M766 175 C765.5 173 763.8 172.3 761.3 172.3 C758 172.3 756.6 174 756.6 176 C756.6 181 766.2 180 766.2 185.5 C766.2 188.2 764 189.8 761 189.8 C758.3 189.8 756.5 188.8 756 186.5 M761.1 169.2 V192.5"/>
<ellipse cx="812.2" cy="176" rx="4.3" ry="5"/><ellipse cx="824.3" cy="186.3" rx="4.3" ry="5"/><path d="M824.8 170.4 L811.2 191.3"/>
</svg>
<svg class="a" style="left:783px;top:180px" width="10" height="7" viewBox="0 0 10 7" fill="none" stroke="#444" stroke-width="1.4"><path d="M1 1 L5.0 6 L9 1"/></svg>
<svg class="a" style="left:845px;top:171px" width="15" height="21" viewBox="0 0 15 21"><path d="M7.5 1 a5.5 5.5 0 0 1 5.5 5.5 C13 13 9 17.5 3 20 L2.3 18.8 C6 16.5 7.8 14 8.2 12 a5.5 5.5 0 1 1 -0.7 -11z" fill="#333"/></svg>
<div class="a" style="left:872px;top:166px;width:1px;height:33px;background:#c8c6c4"></div>
<div class="t" style="left:896.66px;top:166.80px;font-size:13.00px;line-height:15px;color:#333;transform:scaleX(1.0621);">0</div>
<div class="t" style="left:883.96px;top:179.30px;font-size:13.00px;line-height:15px;color:#333;transform:scaleX(1.1296);">.00</div>
<svg class="a" style="left:880px;top:169px" width="16" height="12" viewBox="0 0 16 12" fill="none" stroke="#1e88d4" stroke-width="1.5"><path d="M15 6 H2 M6 2 L2 6 L6 10"/></svg>
<div class="t" style="left:918.05px;top:166.80px;font-size:13.00px;line-height:15px;color:#333;transform:scaleX(1.1357);">.00</div>
<div class="t" style="left:924.44px;top:179.30px;font-size:13.00px;line-height:15px;color:#333;transform:scaleX(1.3119);">.0</div>
<svg class="a" style="left:914px;top:180.5px" width="16" height="12" viewBox="0 0 16 12" fill="none" stroke="#1e88d4" stroke-width="1.5"><path d="M1 6 H14 M10 2 L14 6 L10 10"/></svg>
<svg class="a" style="left:965px;top:100px" width="40" height="100" viewBox="965 100 40 100" fill="none" stroke-width="1.6">
<rect x="971.6" y="108" width="23" height="20.2" fill="#fff" stroke="#444"/>
<path d="M972 114.2 H994.5 M972 121.3 H994.5 M987.5 108 V128 M991 108 V128" stroke="#777" stroke-width="1.2"/>
<rect x="976" y="108.3" width="8" height="5.9" fill="#f8a0a8" stroke="#e0202a" stroke-width="1.7"/>
<rect x="976" y="121.6" width="11" height="6.4" fill="#f8a0a8" stroke="#e0202a" stroke-width="1.7"/>
<rect x="976.6" y="114.5" width="4.4" height="6.5" fill="#9cc8ef" stroke="#1a72c8" stroke-width="1.5"/>
<path d="M971.6 161.8 V142.8 H994.6 V150" stroke="#444"/>
<path d="M972 148.5 H994 M972 155.9 H979 M979.2 143 V158 M987 143 V148" stroke="#777" stroke-width="1.2"/>
<path d="M979 148.5 H994.4 V161.8 H983 Z" fill="#9cc8ef"/><path d="M994.4 152 V161.8 H988" stroke="#1a72c8" stroke-width="1.6"/>
<path d="M994 149.8 L985.5 158.6" stroke="#444" stroke-width="2.6" stroke-linecap="round"/>
<path d="M985.5 157.2 C982 158 981 161.5 975.5 162.8 C981.5 164 986 162 987 159.5 Z" fill="#1e88d4" stroke="#1a72c8" stroke-width="1"/>
<rect x="971.6" y="175.6" width="23" height="21" fill="#fff" stroke="#444"/>
<path d="M975 176 V196.5" stroke="#777" stroke-width="1.2"/>
<path d="M975.5 180.2 H992 L982 193 H975.5 Z" fill="#9cc8ef"/><path d="M975.8 180 V193 M975.5 180.3 H991" stroke="#1a72c8" stroke-width="1.5"/>
<path d="M994 181 L985 190.6" stroke="#444" stroke-width="2.6" stroke-linecap="round"/>
<path d="M985 189.2 C981.5 190 980.5 194 974.8 196 C981 197.2 985.5 195 986.5 191.5 Z" fill="#1e88d4" stroke="#1a72c8" stroke-width="1"/>
</svg>
<div class="t" style="left:998.07px;top:108.40px;font-size:19.50px;line-height:22px;color:#444;transform:scaleX(0.9436);">Conditional Formatting</div>
<svg class="a" style="left:1188px;top:115px" width="10" height="7" viewBox="0 0 10 7" fill="none" stroke="#444" stroke-width="1.4"><path d="M1 1 L5.0 6 L9 1"/></svg>
<div class="t" style="left:997.58px;top:142.00px;font-size:19.50px;line-height:22px;color:#444;transform:scaleX(0.8889);">Format as Table</div>
<svg class="a" style="left:1129px;top:149px" width="10" height="7" viewBox="0 0 10 7" fill="none" stroke="#444" stroke-width="1.4"><path d="M1 1 L5.0 6 L9 1"/></svg>
<div class="t" style="left:998.16px;top:176.00px;font-size:19.50px;line-height:22px;color:#444;transform:scaleX(0.8516);">Cell Styles</div>
<svg class="a" style="left:1082px;top:183px" width="10" height="7" viewBox="0 0 10 7" fill="none" stroke="#444" stroke-width="1.4"><path d="M1 1 L5.0 6 L9 1"/></svg>
<svg class="a" style="left:1230px;top:100px" width="40" height="100" viewBox="1230 100 40 100" fill="none" stroke-width="1.6">
<rect x="1237.8" y="108.2" width="22.4" height="19.6" stroke="#444" fill="#fff"/>
<path d="M1245.7 108 V128 M1253 108 V128 M1238 113.7 H1260 M1238 122 H1260" stroke="#666" stroke-width="1.3"/>
<rect x="1246" y="113.8" width="14" height="8.2" fill="#9cc8ef" stroke="#1a72c8" stroke-width="1.8"/>
<path d="M1250 117.9 H1239 M1243.5 113 L1238.8 117.9 L1243.5 122.8" stroke="#1e88d4" stroke-width="1.8"/>
<path d="M1237.8 142.2 H1260.2 M1237.8 161.6 H1260.2 M1237.8 142 V162" stroke="#444"/>
<path d="M1245.7 142 V162 M1253 142 V148 M1253 156 V162 M1238 147.5 H1260 M1238 155.5 H1260" stroke="#666" stroke-width="1.3"/>
<rect x="1242" y="147.6" width="8" height="7.8" fill="#9cc8ef" stroke="#1a72c8" stroke-width="1.8"/>
<path d="M1253 148.3 L1260 155.8 M1260 148.3 L1253 155.8" stroke="#e81123" stroke-width="1.8"/>
<rect x="1237.8" y="177.8" width="22.4" height="19.4" stroke="#444" fill="#fff"/>
<path d="M1243.7 178 V197 M1254 178 V197 M1238 183.3 H1260 M1238 191.7 H1260" stroke="#666" stroke-width="1.3"/>
<rect x="1244" y="183.4" width="10" height="8.2" fill="#9cc8ef" stroke="#1a72c8" stroke-width="1.8"/>
<path d="M1241.5 175.5 H1256.5 M1241.5 172.8 V178.2 M1256.5 172.8 V178.2" stroke="#1e88d4" stroke-width="1.6"/>
</svg>
<div class="t" style="left:1264.35px;top:108.00px;font-size:19.50px;line-height:22px;color:#444;transform:scaleX(0.9183);">Insert</div>
<svg class="a" style="left:1323px;top:115px" width="10" height="7" viewBox="0 0 10 7" fill="none" stroke="#444" stroke-width="1.4"><path d="M1 1 L5.0 6 L9 1"/></svg>
<div class="t" style="left:1264.55px;top:142.00px;font-size:19.50px;line-height:22px;color:#444;transform:scaleX(0.9091);">Delete</div>
<svg class="a" style="left:1329px;top:149px" width="10" height="7" viewBox="0 0 10 7" fill="none" stroke="#444" stroke-width="1.4"><path d="M1 1 L5.0 6 L9 1"/></svg>
<div class="t" style="left:1264.51px;top:176.00px;font-size:19.50px;line-height:22px;color:#444;transform:scaleX(0.9331);">Format</div>
<svg class="a" style="left:1327px;top:183px" width="10" height="7" viewBox="0 0 10 7" fill="none" stroke="#444" stroke-width="1.4"><path d="M1 1 L5.0 6 L9 1"/></svg>
<svg class="a" style="left:1370px;top:100px" width="120" height="100" viewBox="1370 100 120 100" fill="none" stroke-width="1.6">
<path d="M1396.5 110 V108.2 H1380 L1389 117.8 L1380 127.5 H1396.5 V125.5" stroke="#444" stroke-linejoin="miter"/>
<rect x="1376.8" y="142.2" width="22.6" height="19.6" fill="#f8f8f8" stroke="#444"/><path d="M1377 145.6 H1399" stroke="#444"/>
<path d="M1387.3 147.5 V159 M1382.2 154 L1387.3 159.2 L1392.4 154" stroke="#1e88d4" stroke-width="1.7"/>
<path d="M1377 189 L1390.6 175.4 L1398 182.4 L1384.4 196 Z" fill="#f8f8f8"/>
<path d="M1377 189 L1382.4 183.2 L1389.5 191 L1384.4 196 Z" fill="#d79ee0"/>
<path d="M1377 189 L1390.6 175.4 L1398 182.4 L1384.4 196 Z M1382.4 183.2 L1389.5 191" stroke="#b146c2" stroke-width="1.8" stroke-linejoin="miter"/>
<path d="M1439 128.3 L1445.6 110.6 L1452.2 128.3 M1441.2 122 H1450" stroke="#1e88d4" stroke-width="1.7"/>
<path d="M1439 132.2 H1450.6 L1439 148.4 H1451.3" stroke="#444" stroke-width="1.7"/>
<path d="M1456.9 120.2 H1479 V124 L1470.3 132.6 V142.7 H1465.9 V132.6 L1456.9 124 Z" fill="#f8f8f8" stroke="#444" stroke-width="1.6"/>
</svg>
<svg class="a" style="left:1409px;top:115px" width="10" height="7" viewBox="0 0 10 7" fill="none" stroke="#444" stroke-width="1.4"><path d="M1 1 L5.0 6 L9 1"/></svg>
<svg class="a" style="left:1405px;top:149px" width="10" height="7" viewBox="0 0 10 7" fill="none" stroke="#444" stroke-width="1.4"><path d="M1 1 L5.0 6 L9 1"/></svg>
<svg class="a" style="left:1405px;top:183px" width="10" height="7" viewBox="0 0 10 7" fill="none" stroke="#444" stroke-width="1.4"><path d="M1 1 L5.0 6 L9 1"/></svg>
<div class="t" style="left:1432.13px;top:159.00px;font-size:19.50px;line-height:22px;color:#444;transform:scaleX(0.9812);">Sort &amp;</div>
<div class="t" style="left:1430.53px;top:182.00px;font-size:19.50px;line-height:22px;color:#444;transform:scaleX(0.9177);">Filter</div>
<svg class="a" style="left:1474px;top:189px" width="10" height="7" viewBox="0 0 10 7" fill="none" stroke="#444" stroke-width="1.4"><path d="M1 1 L5.0 6 L9 1"/></svg>
<svg class="a" style="left:1498px;top:106px" width="52" height="50" viewBox="0 0 52 50" fill="none" stroke="#444" stroke-width="1.5"><circle cx="32.6" cy="18.6" r="15.3"/><path d="M22 30 L4 46"/></svg>
<div class="t" style="left:1496.44px;top:159.00px;font-size:19.50px;line-height:22px;color:#444;transform:scaleX(0.9733);">Find &amp;</div>
<div class="t" style="left:1492.22px;top:182.00px;font-size:19.50px;line-height:22px;color:#444;transform:scaleX(0.8840);">Select</div>
<svg class="a" style="left:1544px;top:189px" width="10" height="7" viewBox="0 0 10 7" fill="none" stroke="#444" stroke-width="1.4"><path d="M1 1 L5.0 6 L9 1"/></svg>
</body></html>
